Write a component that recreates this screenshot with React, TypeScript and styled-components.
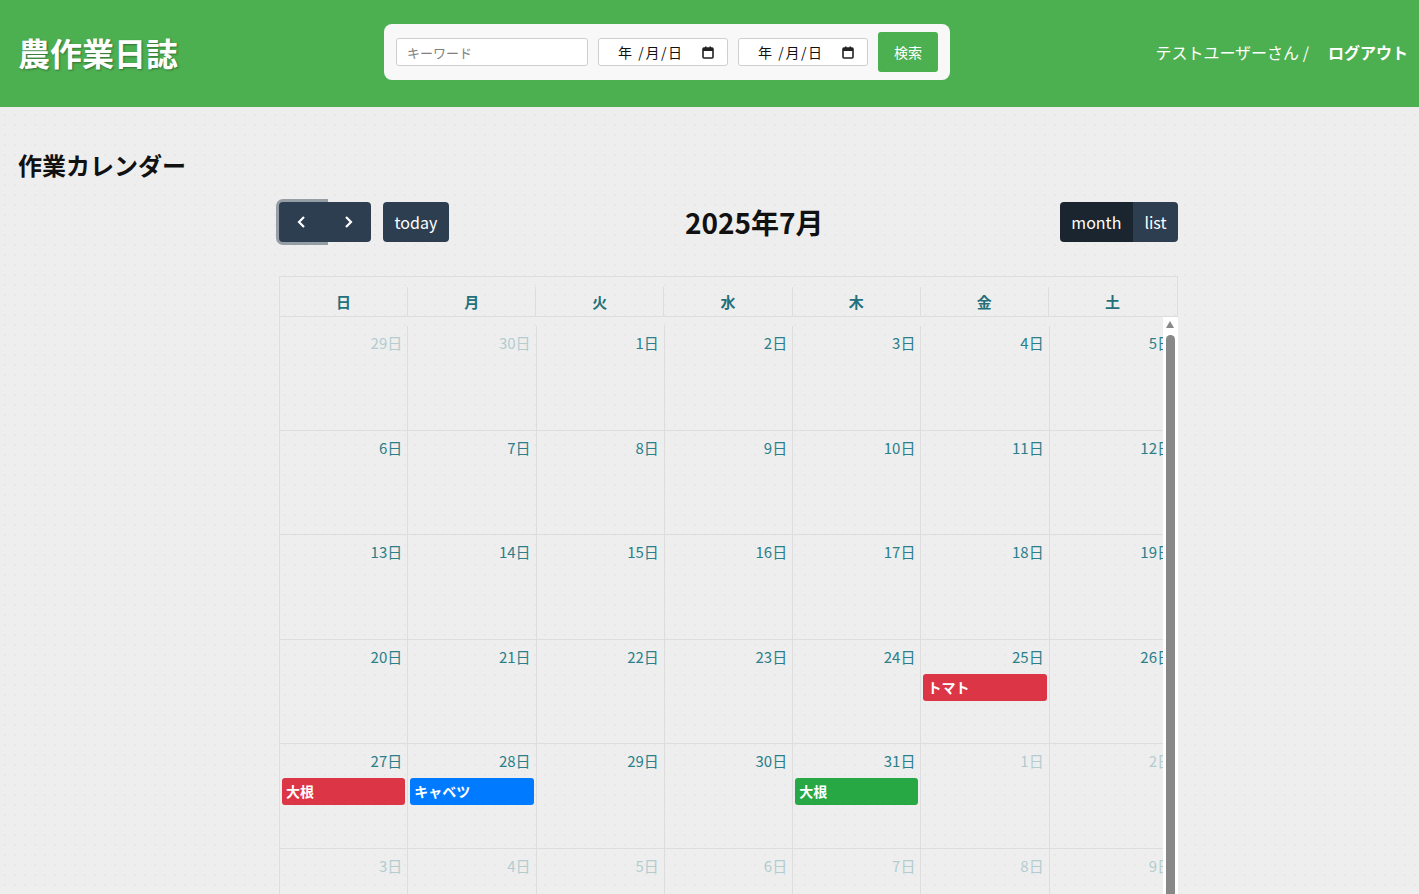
import React from 'react'
import styled, { createGlobalStyle } from 'styled-components'

const GlobalStyle = createGlobalStyle`
  html, body {
    margin: 0;
    padding: 0;
  }
  body {
    font-family: "Noto Sans CJK JP", "Noto Sans", sans-serif;
    background-color: #eeeeee;
    background-image: radial-gradient(#e7e7e7 1px, transparent 1.2px);
    background-size: 10px 10px;
    color: #111;
  }
`

const Header = styled.header`
  height: 107px;
  background: #4caf50;
  display: flex;
  align-items: center;
  padding: 0 11px 3px 18px;
  box-sizing: border-box;
`

const Logo = styled.h1`
  margin: 0;
  font-size: 32px;
  line-height: 40px;
  font-weight: 700;
  color: #fff;
  text-shadow: 1px 1px 2px rgba(0, 0, 0, 0.35);
  width: 366px;
`

const SearchForm = styled.form`
  display: flex;
  align-items: center;
  gap: 10px;
  background: #f8f8f8;
  border-radius: 8px;
  padding: 8px 12px;
  height: 56px;
  box-sizing: border-box;
`

const TextInput = styled.input`
  width: 192px;
  height: 28px;
  box-sizing: border-box;
  border: 1px solid #cfcfcf;
  border-radius: 3px;
  padding: 0 10px;
  font-family: inherit;
  font-size: 13px;
  background: #fff;
  &::placeholder {
    color: #808080;
  }
`

const DateBox = styled.div`
  width: 130px;
  height: 28px;
  box-sizing: border-box;
  border: 1px solid #cfcfcf;
  border-radius: 3px;
  background: #fff;
  display: flex;
  align-items: center;
  padding: 0 13px 0 19px;
  font-size: 14px;
  color: #111;
`

const DateText = styled.span`
  flex: 1;
  white-space: pre;
  letter-spacing: 1.6px;
`

const SearchButton = styled.button`
  width: 60px;
  height: 40px;
  border: none;
  border-radius: 3px;
  background: #4caf50;
  color: #fff;
  font-family: inherit;
  font-size: 14px;
`

const UserArea = styled.div`
  margin-left: auto;
  display: flex;
  align-items: center;
  gap: 19px;
  color: #fff;
  font-size: 16px;
`

const Logout = styled.a`
  color: #fff;
  font-weight: 700;
  text-decoration: none;
`

const Main = styled.main`
  padding: 43px 18px 0;
`

const PageTitle = styled.h2`
  margin: 0;
  font-size: 24px;
  font-weight: 700;
  line-height: 30px;
`

const Calendar = styled.div`
  width: 899px;
  margin: 21px 0 0 261px;
`

const Toolbar = styled.div`
  display: flex;
  justify-content: space-between;
  align-items: center;
  height: 41px;
  margin-bottom: 34px;
`

const ToolGroup = styled.div`
  display: flex;
  gap: 12px;
`

const ButtonGroup = styled.div`
  display: flex;
`

const CalButton = styled.button<{ $active?: boolean; $focus?: boolean; $icon?: boolean }>`
  height: 40px;
  padding: 0 ${(p) => (p.$icon ? '16px' : '11.5px')};
  border: none;
  background: ${(p) => (p.$active ? '#1a252f' : '#2c3e50')};
  color: #fff;
  font-family: inherit;
  font-size: 16px;
  display: flex;
  align-items: center;
  justify-content: center;
  border-radius: 4px;
  box-shadow: ${(p) => (p.$focus ? '0 0 0 3px rgba(76, 91, 106, 0.55)' : 'none')};
  position: relative;
  ${ButtonGroup} > & + & {
    border-left: 1px solid #3a4d60;
  }
  ${ButtonGroup} > &:not(:first-child) {
    border-top-left-radius: 0;
    border-bottom-left-radius: 0;
  }
  ${ButtonGroup} > &:not(:last-child) {
    border-top-right-radius: 0;
    border-bottom-right-radius: 0;
  }
`

const Title = styled.h2`
  margin: 0;
  font-size: 28px;
  font-weight: 700;
`

const Grid = styled.div`
  border-left: 1px solid #dddddd;
  position: relative;
`

const HeadRow = styled.div`
  display: grid;
  grid-template-columns: repeat(7, 1fr);
  padding-top: 10px;
  border-top: 1px solid #dddddd;
  border-bottom: 1px solid #dddddd;
  border-right: 1px solid #dddddd;
`

const HeadCell = styled.div`
  height: 29px;
  line-height: 29px;
  text-align: center;
  font-size: 15px;
  font-weight: 700;
  color: #23707a;
  border-right: 1px solid #dddddd;
  &:last-child {
    border-right-color: transparent;
  }
`

const Body = styled.div`
  padding-top: 9px;
  position: relative;
  overflow: hidden;
`

const WeekRow = styled.div`
  display: grid;
  grid-template-columns: repeat(7, 1fr);
  height: 104.5px;
  border-bottom: 1px solid #dddddd;
  box-sizing: border-box;
`

const DayCell = styled.div`
  border-right: 1px solid #dddddd;
  padding: 6px 4px 0 2px;
  display: flex;
  flex-direction: column;
  min-width: 0;
`

const DayNumber = styled.div<{ $other?: boolean }>`
  text-align: right;
  font-size: 15px;
  line-height: 22px;
  color: #2b7f8a;
  opacity: ${(p) => (p.$other ? 0.3 : 1)};
  margin-right: 1px;
  white-space: nowrap;
`

const EventBar = styled.div<{ $color: string }>`
  margin: 6px -2px 0 0;
  height: 27px;
  border-radius: 3px;
  background: ${(p) => p.$color};
  color: #fff;
  font-size: 14px;
  font-weight: 700;
  line-height: 27px;
  padding-left: 4px;
`

const ScrollTrack = styled.div`
  position: absolute;
  top: 0;
  right: 0;
  bottom: 0;
  width: 15px;
  background: #fff;
`

const ScrollArrow = styled.div`
  position: absolute;
  top: 4px;
  left: 3px;
  width: 0;
  height: 0;
  border-left: 4.5px solid transparent;
  border-right: 4.5px solid transparent;
  border-bottom: 7px solid #888;
`

const ScrollThumb = styled.div`
  position: absolute;
  top: 18px;
  left: 3px;
  width: 9px;
  bottom: -40px;
  border-radius: 5px;
  background: #888;
`

const CalIcon = () => (
  <svg width="12" height="13" viewBox="0 0 12 13">
    <rect x="1" y="2" width="10" height="10" rx="1" fill="none" stroke="#222" strokeWidth="1.6" />
    <rect x="1" y="2" width="10" height="3" fill="#222" />
    <rect x="3" y="0.5" width="1.5" height="2.5" fill="#222" />
    <rect x="7.5" y="0.5" width="1.5" height="2.5" fill="#222" />
  </svg>
)

const ChevronLeft = () => (
  <svg width="14" height="14" viewBox="0 0 14 14">
    <path d="M9 2 L4 7 L9 12" fill="none" stroke="#fff" strokeWidth="2.2" />
  </svg>
)

const ChevronRight = () => (
  <svg width="14" height="14" viewBox="0 0 14 14">
    <path d="M5 2 L10 7 L5 12" fill="none" stroke="#fff" strokeWidth="2.2" />
  </svg>
)

type Day = { n: number; other?: boolean; event?: { title: string; color: string } }

const weeks: Day[][] = [
  [{ n: 29, other: true }, { n: 30, other: true }, { n: 1 }, { n: 2 }, { n: 3 }, { n: 4 }, { n: 5 }],
  [{ n: 6 }, { n: 7 }, { n: 8 }, { n: 9 }, { n: 10 }, { n: 11 }, { n: 12 }],
  [{ n: 13 }, { n: 14 }, { n: 15 }, { n: 16 }, { n: 17 }, { n: 18 }, { n: 19 }],
  [
    { n: 20 }, { n: 21 }, { n: 22 }, { n: 23 }, { n: 24 },
    { n: 25, event: { title: 'トマト', color: '#dc3545' } },
    { n: 26 },
  ],
  [
    { n: 27, event: { title: '大根', color: '#dc3545' } },
    { n: 28, event: { title: 'キャベツ', color: '#007bff' } },
    { n: 29 }, { n: 30 },
    { n: 31, event: { title: '大根', color: '#28a745' } },
    { n: 1, other: true }, { n: 2, other: true },
  ],
  [3, 4, 5, 6, 7, 8, 9].map((n) => ({ n, other: true })),
]

const weekdays = ['日', '月', '火', '水', '木', '金', '土']

const App = () => (
  <>
    <GlobalStyle />
    <Header>
      <Logo>農作業日誌</Logo>
      <SearchForm onSubmit={(e) => e.preventDefault()}>
        <TextInput placeholder="キーワード" />
        <DateBox>
          <DateText>年 /月/日</DateText>
          <CalIcon />
        </DateBox>
        <DateBox>
          <DateText>年 /月/日</DateText>
          <CalIcon />
        </DateBox>
        <SearchButton type="submit">検索</SearchButton>
      </SearchForm>
      <UserArea>
        <span>テストユーザーさん /</span>
        <Logout href="#">ログアウト</Logout>
      </UserArea>
    </Header>
    <Main>
      <PageTitle>作業カレンダー</PageTitle>
      <Calendar>
        <Toolbar>
          <ToolGroup>
            <ButtonGroup>
              <CalButton $icon $focus aria-label="prev"><ChevronLeft /></CalButton>
              <CalButton $icon aria-label="next"><ChevronRight /></CalButton>
            </ButtonGroup>
            <CalButton>today</CalButton>
          </ToolGroup>
          <Title>2025年7月</Title>
          <ToolGroup>
            <ButtonGroup>
              <CalButton $active>month</CalButton>
              <CalButton>list</CalButton>
            </ButtonGroup>
          </ToolGroup>
        </Toolbar>
        <Grid>
          <HeadRow>
            {weekdays.map((w) => (
              <HeadCell key={w}>{w}</HeadCell>
            ))}
          </HeadRow>
          <Body>
            {weeks.map((week, i) => (
              <WeekRow key={i}>
                {week.map((d, j) => (
                  <DayCell key={j}>
                    <DayNumber $other={d.other}>{d.n}日</DayNumber>
                    {d.event && <EventBar $color={d.event.color}>{d.event.title}</EventBar>}
                  </DayCell>
                ))}
              </WeekRow>
            ))}
            <ScrollTrack>
              <ScrollArrow />
              <ScrollThumb />
            </ScrollTrack>
          </Body>
        </Grid>
      </Calendar>
    </Main>
  </>
)

export default App
